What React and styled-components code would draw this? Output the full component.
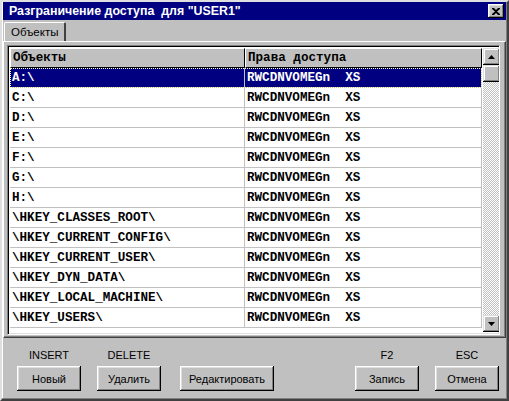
import React from "react";
import styled, { createGlobalStyle } from "styled-components";

const GlobalStyle = createGlobalStyle`
  html, body {
    margin: 0;
    padding: 0;
    background: #c0c0c0;
  }
  * {
    box-sizing: border-box;
  }
`;

const rows = [
  "A:\\",
  "C:\\",
  "D:\\",
  "E:\\",
  "F:\\",
  "G:\\",
  "H:\\",
  "\\HKEY_CLASSES_ROOT\\",
  "\\HKEY_CURRENT_CONFIG\\",
  "\\HKEY_CURRENT_USER\\",
  "\\HKEY_DYN_DATA\\",
  "\\HKEY_LOCAL_MACHINE\\",
  "\\HKEY_USERS\\",
];

const buttons = [
  { key: "INSERT", label: "Новый", width: 64 },
  { key: "DELETE", label: "Удалить", width: 64 },
  { key: "", label: "Редактировать", width: 94 },
];

const rightButtons = [
  { key: "F2", label: "Запись", width: 64 },
  { key: "ESC", label: "Отмена", width: 64 },
];

export default function App() {
  return (
    <>
      <GlobalStyle />
      <Window>
        <TitleBar>
          <Title>Разграничение доступа&nbsp; для "USER1"</Title>
          <CloseButton>
            <svg width="8" height="7" viewBox="0 0 8 7">
              <path
                d="M0 0h2l2 2 2-2h2v1L5 3.5 8 6v1H6L4 5 2 7H0V6l3-2.5L0 1z"
                fill="#000"
              />
            </svg>
          </CloseButton>
        </TitleBar>
        <TabStrip>
          <Tab>Объекты</Tab>
        </TabStrip>
        <TabSheet>
          <Grid>
            <GridBody>
              <HeaderRow>
                <HeaderCell $w={235}>Объекты</HeaderCell>
                <HeaderCell $w={237}>Права доступа</HeaderCell>
              </HeaderRow>
              {rows.map((name, i) => (
                <Row key={name} $selected={i === 0}>
                  <Cell $w={235}>{name}</Cell>
                  <Cell $w={237}>RWCDNVOMEGn&nbsp;&nbsp;XS</Cell>
                </Row>
              ))}
            </GridBody>
            <ScrollBar>
              <ScrollButton>
                <svg width="7" height="4" viewBox="0 0 7 4">
                  <path d="M3.5 0L7 4H0z" fill="#000" />
                </svg>
              </ScrollButton>
              <ScrollButton />
              <Track />
              <ScrollButton>
                <svg width="7" height="4" viewBox="0 0 7 4">
                  <path d="M0 0h7L3.5 4z" fill="#000" />
                </svg>
              </ScrollButton>
            </ScrollBar>
          </Grid>
        </TabSheet>
        <ButtonBar>
          <ButtonGroup>
            {buttons.map((b) => (
              <ButtonSlot key={b.label}>
                <KeyLabel>{b.key || "\u00a0"}</KeyLabel>
                <Button $w={b.width}>{b.label}</Button>
              </ButtonSlot>
            ))}
          </ButtonGroup>
          <ButtonGroup>
            {rightButtons.map((b) => (
              <ButtonSlot key={b.label}>
                <KeyLabel>{b.key}</KeyLabel>
                <Button $w={b.width}>{b.label}</Button>
              </ButtonSlot>
            ))}
          </ButtonGroup>
        </ButtonBar>
      </Window>
    </>
  );
}

const Window = styled.div`
  width: 509px;
  height: 401px;
  background: #c0c0c0;
  border-top: 2px solid #dfdfdf;
  border-left: 2px solid #dfdfdf;
  border-right: 2px solid #404040;
  border-bottom: 2px solid #404040;
  box-shadow: inset -1px -1px 0 #808080, inset 1px 1px 0 #fff;
  padding: 0 1px;
  display: flex;
  flex-direction: column;
  font-family: "Liberation Sans", Arial, sans-serif;
`;

const TitleBar = styled.div`
  height: 18px;
  background: #000080;
  display: flex;
  align-items: center;
  justify-content: space-between;
  padding: 0 2px 0 6px;
`;

const Title = styled.div`
  color: #fff;
  font-weight: bold;
  font-size: 12.4px;
`;

const CloseButton = styled.div`
  width: 16px;
  height: 14px;
  background: #c0c0c0;
  display: flex;
  align-items: center;
  justify-content: center;
  box-shadow: inset -1px -1px 0 #000, inset 1px 1px 0 #fff,
    inset -2px -2px 0 #808080, inset 2px 2px 0 #dfdfdf;
`;

const TabStrip = styled.div`
  display: flex;
  padding: 2px 0 0 1px;
  height: 21px;
`;

const Tab = styled.div`
  height: 19px;
  padding: 0 6px;
  font-size: 11.5px;
  color: #000;
  display: flex;
  align-items: center;
  border-top: 1px solid #fff;
  border-left: 1px solid #fff;
  border-right: 2px solid #404040;
  border-top-left-radius: 2px;
  border-top-right-radius: 2px;
  position: relative;
  z-index: 1;
  margin-bottom: -1px;
  background: #c0c0c0;
`;

const TabSheet = styled.div`
  border-top: 1px solid #fff;
  border-left: 1px solid #fff;
  border-right: 1px solid #404040;
  border-bottom: 1px solid #404040;
  box-shadow: inset -1px -1px 0 #808080;
  padding: 3px 5px 2px 3px;
  display: flex;
`;

const Grid = styled.div`
  flex: 1;
  display: flex;
  background: #fff;
  border-top: 1px solid #808080;
  border-left: 1px solid #808080;
  border-right: 1px solid #fff;
  border-bottom: 1px solid #fff;
  box-shadow: inset 1px 1px 0 #000, inset -1px -1px 0 #dfdfdf;
  padding: 2px;
  height: 290px;
  overflow: hidden;
`;

const GridBody = styled.div`
  flex: 1;
  display: flex;
  flex-direction: column;
  font-family: "Liberation Mono", "Courier New", monospace;
  font-weight: bold;
  font-size: 12.6px;
`;

const HeaderRow = styled.div`
  display: flex;
  height: 20px;
  flex-shrink: 0;
`;

const HeaderCell = styled.div`
  width: ${(p) => p.$w}px;
  background: #c0c0c0;
  border-top: 1px solid #fff;
  border-left: 1px solid #fff;
  border-right: 1px solid #000;
  border-bottom: 1px solid #000;
  padding-left: 2px;
  display: flex;
  align-items: center;
  color: #000;
  white-space: nowrap;
`;

const Row = styled.div`
  display: flex;
  height: 20px;
  flex-shrink: 0;
  border-bottom: 1px solid #c0c0c0;
  background: ${(p) => (p.$selected ? "#000080" : "#fff")};
  color: ${(p) => (p.$selected ? "#fff" : "#000")};
  outline: ${(p) => (p.$selected ? "1px dotted #ffffc0" : "none")};
  outline-offset: -1px;
`;

const Cell = styled.div`
  width: ${(p) => p.$w}px;
  border-right: 1px solid #c0c0c0;
  padding-left: 2px;
  display: flex;
  align-items: center;
  white-space: nowrap;
  overflow: hidden;
`;

const ScrollBar = styled.div`
  width: 17px;
  display: flex;
  flex-direction: column;
  margin-left: 1px;
`;

const ScrollButton = styled.div`
  width: 17px;
  height: 17px;
  flex-shrink: 0;
  background: #c0c0c0;
  display: flex;
  align-items: center;
  justify-content: center;
  box-shadow: inset -1px -1px 0 #000, inset 1px 1px 0 #dfdfdf,
    inset -2px -2px 0 #808080, inset 2px 2px 0 #fff;
`;

const Track = styled.div`
  flex: 1;
  background-color: #c0c0c0;
  background-image: repeating-conic-gradient(#fff 0 25%, #c0c0c0 0 50%);
  background-size: 2px 2px;
`;

const ButtonBar = styled.div`
  display: flex;
  justify-content: space-between;
  padding: 10px 7px 0 14px;
`;

const ButtonGroup = styled.div`
  display: flex;
  gap: 16px;
  align-items: flex-end;
  &:first-child > div:last-child {
    margin-left: 3px;
  }
`;

const ButtonSlot = styled.div`
  display: flex;
  flex-direction: column;
  align-items: center;
  gap: 4px;
`;

const KeyLabel = styled.div`
  font-size: 11px;
  color: #000;
  line-height: 14px;
`;

const Button = styled.div`
  width: ${(p) => p.$w}px;
  height: 25px;
  font-size: 11px;
  color: #000;
  background: #c0c0c0;
  display: flex;
  align-items: center;
  justify-content: center;
  box-shadow: inset -1px -1px 0 #000, inset 1px 1px 0 #fff,
    inset -2px -2px 0 #808080, inset 2px 2px 0 #dfdfdf;
`;
